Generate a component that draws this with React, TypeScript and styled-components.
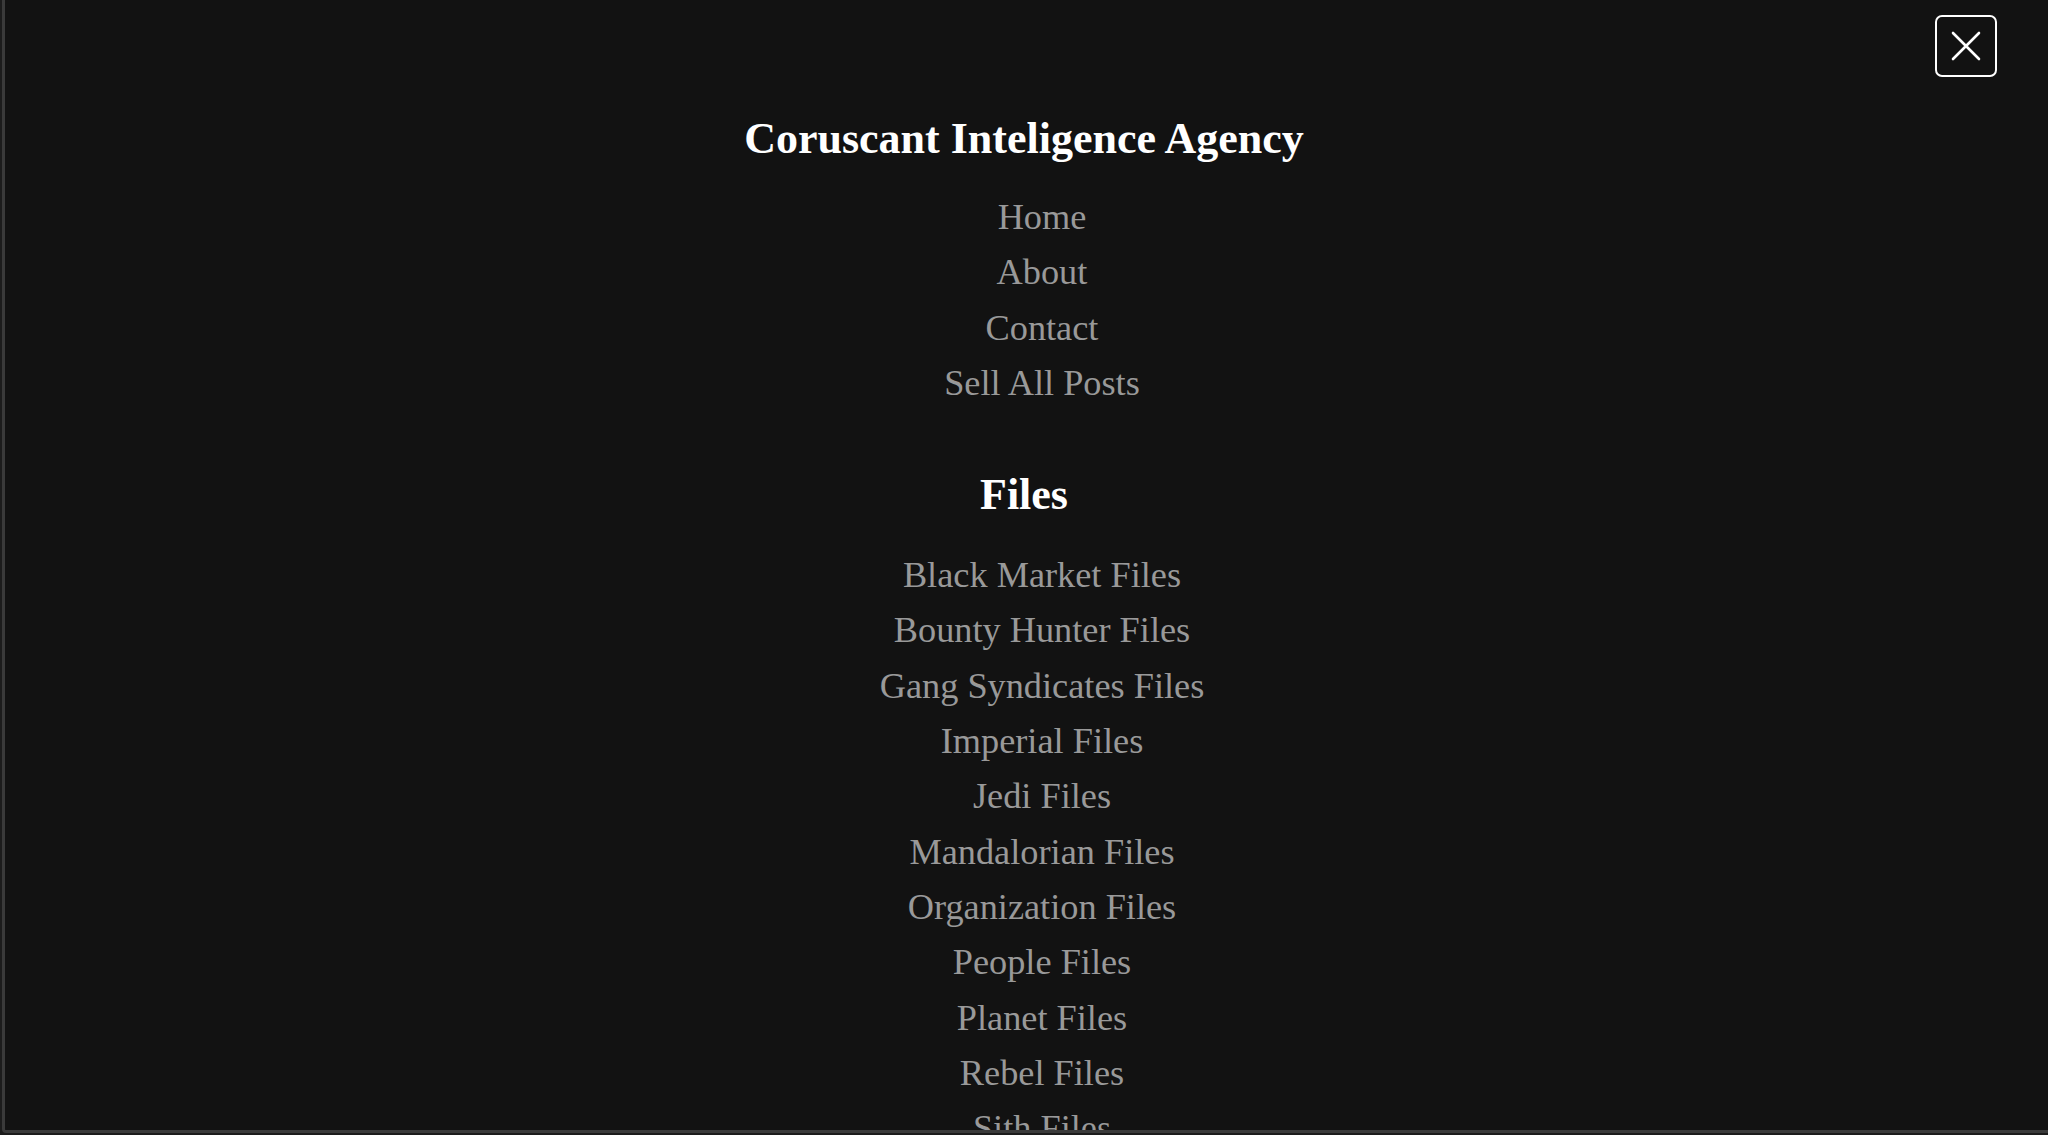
import React from "react";
import styled, { createGlobalStyle } from "styled-components";

const GlobalStyle = createGlobalStyle`
  html, body {
    margin: 0;
    padding: 0;
    background: #1c1c1c;
    overflow: hidden;
  }
  * { box-sizing: border-box; }
`;

const Panel = styled.div`
  position: relative;
  height: 1133px;
  margin-left: 2px;
  background: #121212;
  border-left: 3px solid #3a3a3a;
  border-bottom: 3px solid #3a3a3a;
  border-bottom-left-radius: 4px;
  overflow: hidden;
  display: flex;
  flex-direction: column;
  align-items: center;
  padding-top: 114px;
  font-family: "Liberation Serif", "Times New Roman", serif;
`;

const CloseButton = styled.button`
  position: absolute;
  top: 15px;
  right: 51px;
  width: 62px;
  height: 62px;
  border: 2.5px solid #ffffff;
  border-radius: 7px;
  background: transparent;
  padding: 0;
  display: flex;
  align-items: center;
  justify-content: center;
  cursor: pointer;
`;

const Heading = styled.h2<{ $gap?: number }>`
  margin: ${(p) => p.$gap ?? 0}px 0 0;
  font-size: 44px;
  line-height: 50px;
  font-weight: 700;
  color: #ffffff;
  text-align: center;
  margin-left: -5px;
`;

const LinkList = styled.ul<{ $gap: number }>`
  list-style: none;
  margin: ${(p) => p.$gap}px 0 0;
  padding: 0 0 0 31px;
  display: flex;
  flex-direction: column;
  align-items: center;
`;

const LinkItem = styled.li`
  font-size: 36.3px;
  line-height: 55.3px;
  color: #999999;
  text-align: center;
  white-space: nowrap;
`;

const mainLinks = ["Home", "About", "Contact", "Sell All Posts"];
const fileLinks = [
  "Black Market Files",
  "Bounty Hunter Files",
  "Gang Syndicates Files",
  "Imperial Files",
  "Jedi Files",
  "Mandalorian Files",
  "Organization Files",
  "People Files",
  "Planet Files",
  "Rebel Files",
  "Sith Files",
];

export default function App() {
  return (
    <>
      <GlobalStyle />
      <Panel>
        <CloseButton aria-label="Close">
          <svg width="30" height="30" viewBox="0 0 30 30" fill="none">
            <path d="M2 2 L28 28 M28 2 L2 28" stroke="#ffffff" strokeWidth="2.6" strokeLinecap="round" />
          </svg>
        </CloseButton>
        <Heading as="h1">Coruscant Inteligence Agency</Heading>
        <LinkList $gap={26}>
          {mainLinks.map((l) => (
            <LinkItem key={l}>{l}</LinkItem>
          ))}
        </LinkList>
        <Heading $gap={59}>Files</Heading>
        <LinkList $gap={28}>
          {fileLinks.map((l) => (
            <LinkItem key={l}>{l}</LinkItem>
          ))}
        </LinkList>
      </Panel>
    </>
  );
}
